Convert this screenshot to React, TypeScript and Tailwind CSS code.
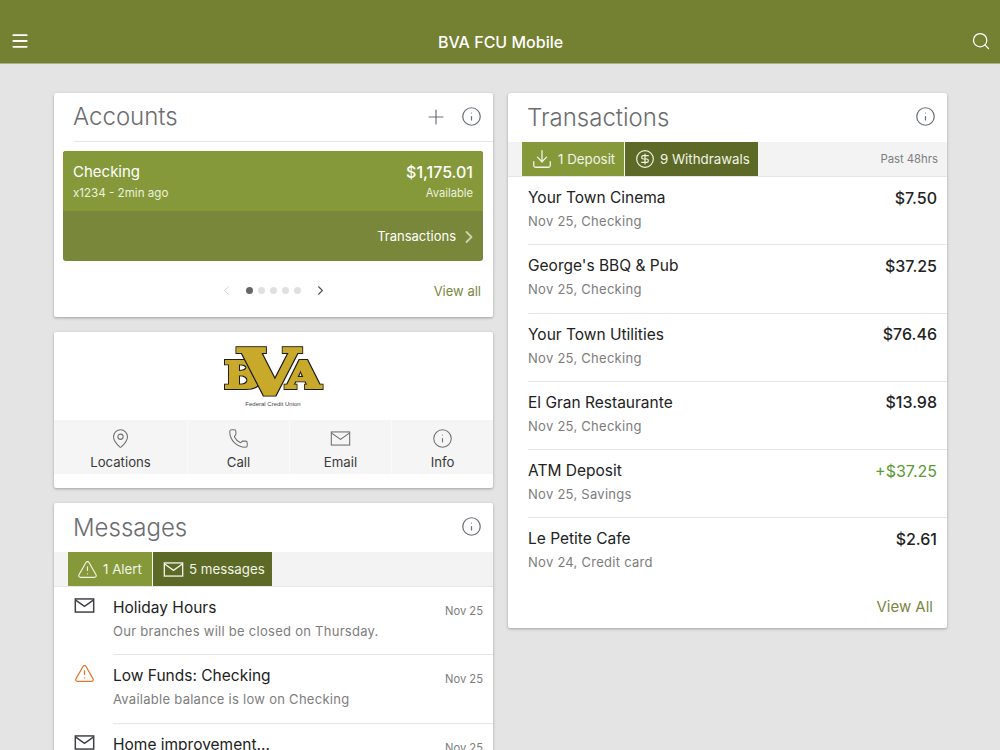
import { ChevronLeft, ChevronRight, Menu, Plus, Search, Info, MapPin, Phone, TriangleAlert, Download, CircleDollarSign } from 'lucide-react'

const transactions = [
  { name: 'Your Town Cinema', sub: 'Nov 25, Checking', amount: '$7.50' },
  { name: "George's BBQ & Pub", sub: 'Nov 25, Checking', amount: '$37.25' },
  { name: 'Your Town Utilities', sub: 'Nov 25, Checking', amount: '$76.46' },
  { name: 'El Gran Restaurante', sub: 'Nov 25, Checking', amount: '$13.98' },
  { name: 'ATM Deposit', sub: 'Nov 25, Savings', amount: '+$37.25', green: true },
  { name: 'Le Petite Cafe', sub: 'Nov 24, Credit card', amount: '$2.61' },
]

const messages = [
  { title: 'Holiday Hours', body: 'Our branches will be closed on Thursday.', alert: false },
  { title: 'Low Funds: Checking', body: 'Available balance is low on Checking', alert: true },
  { title: 'Home improvement...', body: '', alert: false },
]

// square-cornered envelope, lucide's is too round
function MailIcon({ size = 21, strokeWidth = 1.4, className }: { size?: number; strokeWidth?: number; className?: string }) {
  return (
    <svg width={size} height={size} viewBox="0 0 24 24" fill="none" stroke="currentColor" strokeWidth={strokeWidth} className={className}>
      <rect x="1.5" y="4.5" width="21" height="15" />
      <path d="M1.5 5.5 12 13 22.5 5.5" />
    </svg>
  )
}

const quickLinks = [
  { label: 'Locations', Icon: MapPin, width: 'w-[133px]' },
  { label: 'Call', Icon: Phone, width: 'w-[101px]' },
  { label: 'Email', Icon: MailIcon, width: 'w-[101px]' },
  { label: 'Info', Icon: Info, width: 'flex-1' },
]

function Logo() {
  return (
    <svg width="102" height="66" viewBox="0 0 102 66" className="block overflow-visible">
      <defs>
        <filter id="slab" x="-20%" y="-20%" width="140%" height="140%">
          <feMorphology in="SourceGraphic" operator="dilate" radius="0.7" result="fat" />
          <feMorphology in="SourceAlpha" operator="dilate" radius="1.8" result="outer" />
          <feFlood floodColor="#1b1b1b" />
          <feComposite in2="outer" operator="in" result="line" />
          <feMerge>
            <feMergeNode in="line" />
            <feMergeNode in="fat" />
          </feMerge>
        </filter>
      </defs>
      <g fontFamily="'DejaVu Serif', serif" fontWeight="700" fill="#c9a92c" filter="url(#slab)">
        <text x="2" y="46" fontSize="38" textLength="36" lengthAdjust="spacingAndGlyphs">B</text>
      </g>
      <g fontFamily="'DejaVu Serif', serif" fontWeight="700" fill="#c9a92c" filter="url(#slab)">
        <text x="64" y="46" fontSize="38" textLength="35" lengthAdjust="spacingAndGlyphs">A</text>
      </g>
      <g fontFamily="'DejaVu Serif', serif" fontWeight="700" fill="#c9a92c" filter="url(#slab)">
        <text x="16" y="53" fontSize="63" textLength="62" lengthAdjust="spacingAndGlyphs">V</text>
      </g>
      <text x="51" y="64" textAnchor="middle" fontFamily="'Liberation Sans', sans-serif" fontSize="6" fill="#444">Federal Credit Union</text>
    </svg>
  )
}

export default function App() {
  return (
    <div className="h-[750px] w-[1000px] overflow-hidden bg-[#e4e4e4] font-['Inter',sans-serif]">
      <header className="flex h-[64px] items-end justify-between border-b border-[#a9b38a] bg-[#748032] px-[10px] pb-[11px] text-white">
        <Menu size={20} strokeWidth={2.2} className="mb-[1px]" />
        <h1 className="text-[16px] leading-[20px] font-medium">BVA FCU Mobile</h1>
        <Search size={20} strokeWidth={1.5} className="mb-[1px] mr-[-1px]" />
      </header>

      <main className="flex gap-[15px] pl-[54px] pt-[29px]">
        <div className="flex w-[439px] flex-col gap-[15px]">
          {/* Accounts */}
          <section className="h-[224px] rounded-[2px] bg-white shadow-[0_1px_3px_rgba(0,0,0,0.3)]">
            <div className="ml-[20px] flex h-[49px] items-center justify-between border-b border-[#e6e6e6] pr-[11px]">
              <h2 className="-ml-[1px] text-[24px] font-light text-[#6b6d70]">Accounts</h2>
              <div className="flex items-center gap-[14px] text-[#6b7178]">
                <Plus size={24} strokeWidth={1.2} className="mr-[-1px]" />
                <Info size={21} strokeWidth={1.4} className="mb-[2px]" />
              </div>
            </div>
            <div className="ml-[9px] mr-[10px] mt-[9px] h-[110px] overflow-hidden rounded-[3px] bg-[#78873a] text-white">
              <div className="flex h-[60px] justify-between bg-[#85993b] px-[10px] pt-[11px]">
                <div>
                  <div className="text-[15px] leading-[20px]">Checking</div>
                  <div className="mt-[3px] text-[11.6px] leading-[16px] text-[#eef1dd]">x1234 - 2min ago</div>
                </div>
                <div className="text-right">
                  <div className="text-[16px] leading-[20px] font-medium">$1,175.01</div>
                  <div className="mt-[3px] text-[11.2px] leading-[16px] text-[#eef1dd]">Available</div>
                </div>
              </div>
              <div className="flex h-[50px] items-center justify-end pl-[10px] pr-[4px] pt-[2px] text-[13px]">
                Transactions
                <ChevronRight size={20} strokeWidth={2.2} className="ml-[3px] text-[#cdd3ac]" />
              </div>
            </div>
            <div className="relative mt-[17px] flex h-[24px] items-center justify-center pr-[1px] text-[#555]">
              <ChevronLeft size={15} strokeWidth={1.5} className="mr-[12px] text-[#cfcfcf]" />
              <div className="flex gap-[5px]">
                <span className="h-[7px] w-[7px] rounded-full bg-[#666]" />
                <span className="h-[7px] w-[7px] rounded-full bg-[#e0e0e0]" />
                <span className="h-[7px] w-[7px] rounded-full bg-[#e0e0e0]" />
                <span className="h-[7px] w-[7px] rounded-full bg-[#e0e0e0]" />
                <span className="h-[7px] w-[7px] rounded-full bg-[#e0e0e0]" />
              </div>
              <ChevronRight size={15} strokeWidth={1.8} className="ml-[12px]" />
              <span className="absolute right-[12px] top-[4px] text-[13px] text-[#7a8742]">View all</span>
            </div>
          </section>

          {/* Quick links */}
          <section className="h-[156px] rounded-[2px] bg-white shadow-[0_1px_3px_rgba(0,0,0,0.3)]">
            <div className="flex h-[88px] justify-center pr-[2px] pt-[10px]">
              <Logo />
            </div>
            <div className="flex h-[54px] gap-[1px] bg-[#fafafa]">
              {quickLinks.map(({ label, Icon, width }) => (
                <div key={label} className={`${width} flex flex-col items-center bg-[#f5f5f5] pt-[8px]`}>
                  <Icon size={21} strokeWidth={1.2} className="text-[#6e6e6e]" />
                  <span className="mt-[4px] text-[13.2px] leading-[18px] text-[#3a3a3a]">{label}</span>
                </div>
              ))}
            </div>
          </section>

          {/* Messages */}
          <section className="rounded-[2px] bg-white shadow-[0_1px_3px_rgba(0,0,0,0.3)]">
            <div className="flex h-[49px] items-center justify-between pl-[19px] pr-[11px]">
              <h2 className="text-[24px] font-light text-[#6b6d70]">Messages</h2>
              <Info size={21} strokeWidth={1.4} className="mb-[2px] text-[#6b7178]" />
            </div>
            <div className="flex h-[35px] border-b border-[#e6e6e6] bg-[#f3f3f3] pl-[14px]">
              <div className="flex w-[84px] items-center gap-[5px] bg-[#85993b] pl-[9px] text-[13.3px] text-[#f2f4e6]">
                <TriangleAlert size={21} strokeWidth={1.3} />
                <span className="pt-[2px]">1 Alert</span>
              </div>
              <div className="ml-[1px] flex w-[119px] items-center gap-[5px] bg-[#5d6a27] pl-[10px] text-[13.3px] text-[#f2f4e6]">
                <MailIcon size={21} strokeWidth={1.5} />
                <span className="pt-[2px]">5 messages</span>
              </div>
            </div>
            {messages.map(m => (
              <div key={m.title} className="flex h-[68.3px] pl-[20px]">
                <div className="w-[39px] pt-[8px]">
                  {m.alert ? (
                    <TriangleAlert size={21} strokeWidth={1.5} className="text-[#e8742c]" />
                  ) : (
                    <MailIcon size={21} strokeWidth={1.7} className="text-[#3f4245]" />
                  )}
                </div>
                <div className="flex flex-1 justify-between border-b border-[#e6e6e6] pr-[10px] pt-[11px]">
                  <div>
                    <div className="text-[15.5px] leading-[20px] text-[#222]">{m.title}</div>
                    <div className="mt-[4px] text-[13px] leading-[18px] tracking-[0.27px] text-[#7d7d7d]">{m.body}</div>
                  </div>
                  <span className="mt-[4px] text-[11.2px] leading-[18px] text-[#7d7d7d]">Nov 25</span>
                </div>
              </div>
            ))}
          </section>
        </div>

        {/* Transactions */}
        <section className="h-[535px] w-[439px] rounded-[2px] bg-white shadow-[0_1px_3px_rgba(0,0,0,0.3)]">
          <div className="flex h-[49px] items-center justify-between pl-[19px] pr-[11px]">
            <h2 className="text-[24px] font-light text-[#6b6d70]">Transactions</h2>
            <Info size={21} strokeWidth={1.4} className="mb-[2px] text-[#6b7178]" />
          </div>
          <div className="flex h-[35px] items-center border-b border-[#e6e6e6] bg-[#f3f3f3] pl-[14px] pr-[9px]">
            <div className="flex h-full w-[102px] items-center gap-[5px] bg-[#85993b] pl-[9px] text-[13.3px] text-[#f2f4e6]">
              <Download size={22} strokeWidth={1.4} />
              <span className="pt-[1px]">1 Deposit</span>
            </div>
            <div className="ml-[1px] flex h-full w-[133px] items-center gap-[5px] bg-[#5d6a27] pl-[10px] text-[13.3px] text-[#f2f4e6]">
              <CircleDollarSign size={20} strokeWidth={1.4} />
              <span className="pt-[1px]">9 Withdrawals</span>
            </div>
            <span className="ml-auto text-[11.3px] text-[#7d7d7d]">Past 48hrs</span>
          </div>
          <div className="h-[410px]">
            {transactions.map(t => (
              <div key={t.name} className="ml-[20px] flex h-[68.3px] justify-between border-b border-[#e6e6e6] pr-[10px] pt-[11px] last:border-b-0">
                <div>
                  <div className="text-[15.5px] leading-[20px] text-[#222]">{t.name}</div>
                  <div className="mt-[4px] text-[13px] leading-[18px] tracking-[0.27px] text-[#7d7d7d]">{t.sub}</div>
                </div>
                <div className={`-mt-[0.5px] text-[16px] leading-[20px] ${t.green ? 'text-[#5a9a33]' : 'font-medium text-[#222]'}`}>{t.amount}</div>
              </div>
            ))}
          </div>
          <div className="pr-[14px] pt-[9px] text-right text-[15px] text-[#7a8742]">View All</div>
        </section>
      </main>
    </div>
  )
}
